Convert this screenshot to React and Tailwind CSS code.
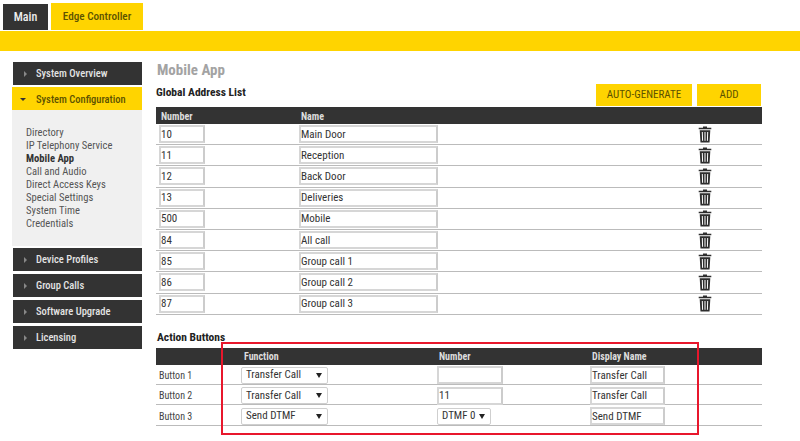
import React from "react";

const menuTop = ["System Overview"];
const menuBottom = ["Device Profiles", "Group Calls", "Software Upgrade", "Licensing"];
const subItems = ["Directory", "IP Telephony Service", "Mobile App", "Call and Audio", "Direct Access Keys", "Special Settings", "System Time", "Credentials"];
const addresses = [
  ["10", "Main Door"],
  ["11", "Reception"],
  ["12", "Back Door"],
  ["13", "Deliveries"],
  ["500", "Mobile"],
  ["84", "All call"],
  ["85", "Group call 1"],
  ["86", "Group call 2"],
  ["87", "Group call 3"],
];

function MenuItem({ label }) {
  return (
    <div className="flex items-center h-[23px] pt-px ml-px w-[129px] bg-[#333333] text-[#e4e4e4] text-[10.5px] font-medium">
      <span className="ml-[11px] mr-[9px] w-0 h-0 border-y-[3px] border-y-transparent border-l-[3px] border-l-[#888888]" />
      {label}
    </div>
  );
}

function Field({ value, className }) {
  return (
    <div className={"flex items-center h-[18px] bg-white border-2 border-[#d6d6d6] border-r-[#cccccc] text-[11px] leading-none text-[#333333] " + className}>
      {value}
    </div>
  );
}

function Select({ value, className }) {
  return (
    <div className={"flex items-center justify-between h-[17px] pl-1 pr-[5px] bg-white border border-[#cfcfcf] rounded-[2px] text-[11px] whitespace-nowrap text-[#333333] " + className}>
      <span>{value}</span>
      <span className="w-0 h-0 border-x-[3px] border-x-transparent border-t-[5px] border-t-[#222222]" />
    </div>
  );
}

function Trash() {
  return (
    <svg width="14" height="17" viewBox="0 0 14 17" className="text-[#2e2e2e]">
      <path d="M5 0.5h4v1.2h4.3v1.6H0.7V1.700H5z" fill="currentColor" />
      <path d="M1.700 4.200h10.600l-0.800 12.300H2.500z" fill="currentColor" />
      <path d="M4.300 6l0.300 8.800M7 6v8.800M9.700 6l-0.300 8.800" stroke="#ffffff" strokeWidth="1" />
    </svg>
  );
}

export default function App() {
  return (
    <div className="w-[800px] h-[441px] overflow-hidden relative bg-white font-['Roboto',sans-serif] [font-stretch:85%]">
      <div className="flex items-end h-[30px] pl-[3px] gap-[3px]">
        <div className="flex items-center justify-center w-[45px] h-[26px] bg-[#333333] text-[#eeeeee] text-xs font-medium">Main</div>
        <div className="w-[92px] h-[27px] pt-1.5 text-center bg-[#ffd400] text-[#5c5200] text-[11.2px] font-medium">Edge Controller</div>
      </div>
      <div className="h-5 mt-px bg-[#ffd400]" />

      <div className="flex mt-[11px]">
        <aside className="w-[156px] pl-3 shrink-0">
          {menuTop.map((m) => <MenuItem key={m} label={m} />)}
          <div className="flex items-center h-[23px] pt-0.5 mt-0.5 w-[130px] bg-[#ffd400] text-[#5c5200] text-[10.5px] font-medium">
            <span className="ml-2 mr-[10px] w-0 h-0 border-x-[3px] border-x-transparent border-t-[3px] border-t-[#333333]" />
            System Configuration
          </div>
          <div className="h-[136px] w-[130px] pt-4 pl-3.5 bg-[#f0f0f0] text-[10.6px] leading-[13px] text-[#555555]">
            {subItems.map((s) => (
              <div key={s} className={s === "Mobile App" ? "font-bold text-[#333333]" : ""}>{s}</div>
            ))}
          </div>
          <div className="flex flex-col gap-[3px] mt-0.5">
            {menuBottom.map((m) => <MenuItem key={m} label={m} />)}
          </div>
        </aside>

        <main className="w-[606px] shrink-0">
          <div className="text-[15px] leading-[14px] font-bold text-[#a3a3a3] pl-px pt-px">Mobile App</div>
          <div className="flex items-end justify-between h-[22px] mt-[7px] gap-[5px]">
            <div className="mr-auto self-start mt-px text-[11.5px] leading-[14px] font-bold text-[#222222]">Global Address List</div>
            <div className="flex items-center justify-center w-24 h-[22px] bg-[#ffd400] text-[#5c5200] text-[11px]">AUTO-GENERATE</div>
            <div className="flex items-center justify-center w-16 h-[22px] mr-px bg-[#ffd400] text-[#5c5200] text-[11px]">ADD</div>
          </div>

          <div className="flex items-center h-[17px] pt-px mt-px bg-[#333333] text-[#dddddd] text-[10px] font-bold">
            <span className="w-[143px] pl-[5px]">Number</span>
            <span className="pl-0.5">Name</span>
          </div>
          {addresses.map(([num, name]) => (
            <div key={num} className="flex items-center h-[21.200px] border-b border-[#bbbbbb]">
              <div className="w-[143px] pl-[3px]"><Field value={num} className="w-[46px]" /></div>
              <Field value={name} className="w-[139px]" />
              <div className="ml-[260px]"><Trash /></div>
            </div>
          ))}

          <div className="text-[11.5px] leading-[14px] font-bold text-[#222222] mt-[15px] pl-px">Action Buttons</div>
          <div className="flex items-center h-[17px] pt-px mt-1 bg-[#333333] text-[#dddddd] text-[10px] font-bold">
            <span className="w-[85px]" />
            <span className="w-[196px] pl-[3px]">Function</span>
            <span className="w-[153px] pl-0.5">Number</span>
            <span className="pl-0.5">Display Name</span>
          </div>
          {[
            ["Button 1", "Transfer Call", "", "Transfer Call"],
            ["Button 2", "Transfer Call", "11", "Transfer Call"],
            ["Button 3", "Send DTMF", null, "Send DTMF"],
          ].map(([label, fn, number, display]) => (
            <div key={label} className="flex items-center h-[20.400px] pt-0.5 border-b border-[#bbbbbb] text-[11px] text-[#444444]">
              <span className="w-[85px] pl-[3px] text-[10px]">{label}</span>
              <div className="w-[196px]"><Select value={fn} className="w-[87px]" /></div>
              <div className="w-[153px]">
                {number === null ? <Select value="DTMF 0" className="w-[54px]" /> : <Field value={number} className="w-[66px]" />}
              </div>
              <Field value={display} className="w-[75px]" />
            </div>
          ))}
        </main>
      </div>

      {/* red highlight drawn over the screenshot */}
      <div className="absolute left-[221px] top-[342px] w-[478px] h-[93px] border-2 border-[#e8172c]" />
    </div>
  );
}
